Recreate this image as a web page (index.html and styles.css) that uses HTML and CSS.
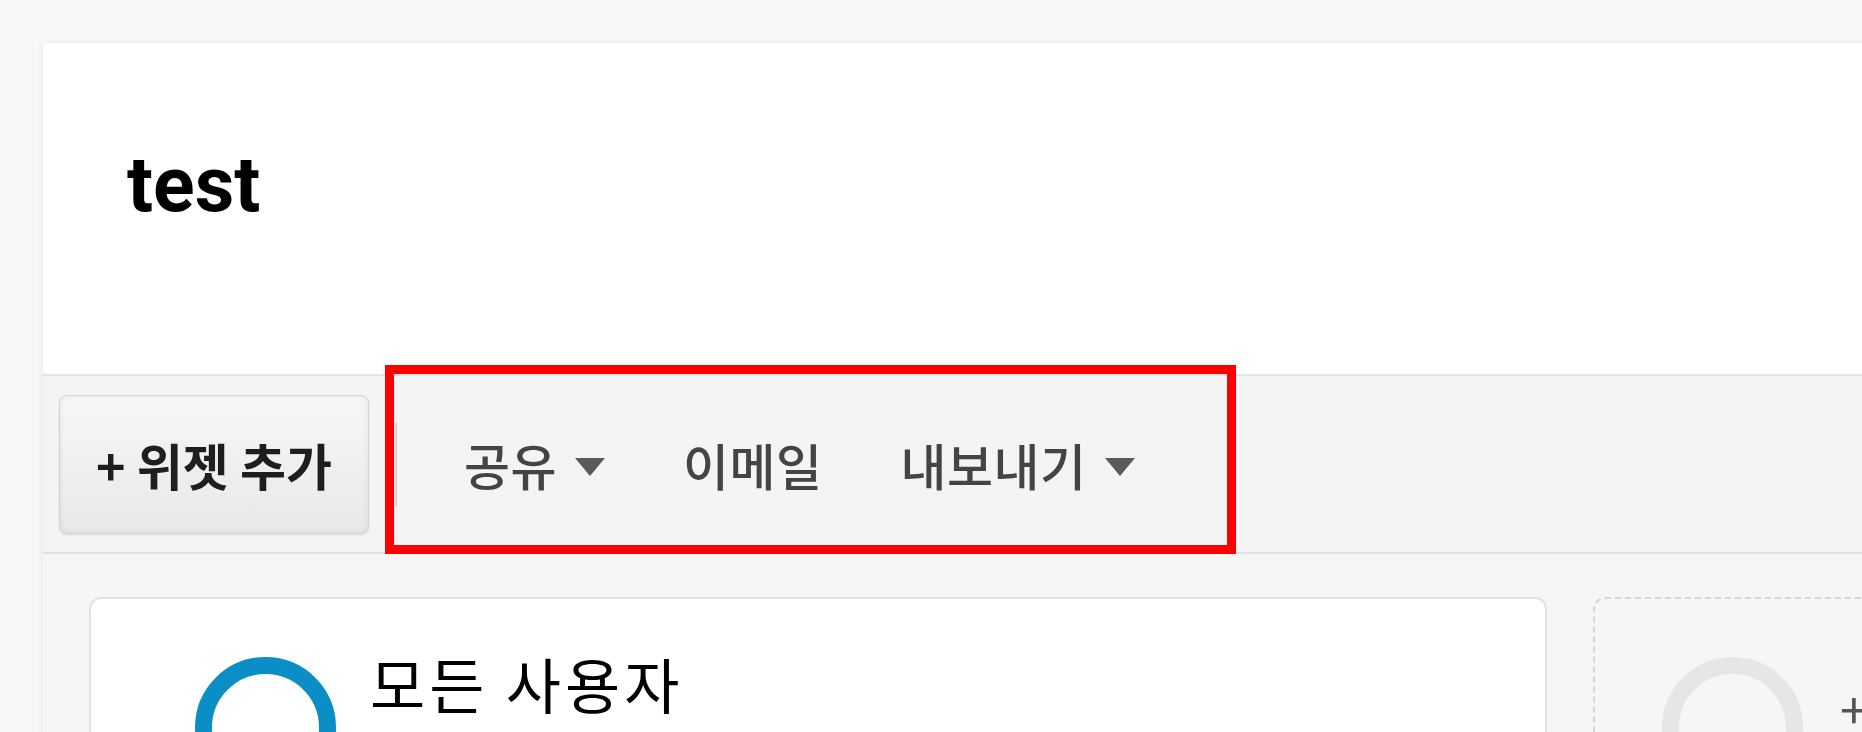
FILE: index.html
```html
<html>
<head>
<title>test - 대시보드</title>
<meta name="viewport" content="width=device-width, initial-scale=1.0">
<link rel="stylesheet" href="styles.css">
</head>
<body>
	<div id='dashboard'>

		<div class="dash-head">
			<h1>test</h1>
		</div>

		<div class="toolbar">
			<button class="add-widget">+ 위젯 추가</button>
			<span class="sep"></span>
			<a class="tool">공유<span class="caret"></span></a>
			<a class="tool">이메일</a>
			<a class="tool">내보내기<span class="caret"></span></a>
		</div>

		<div class="segments">
			<div class="segment">
				<div class="ring"></div>
				<h4>모든 사용자</h4>
			</div>
			<div class="segment empty">
				<div class="ring"></div>
				<span class="add-seg">+ 세그먼트 추가</span>
			</div>
		</div>
	</div>

	<div class="callout"></div>
</body>
</html>
```

FILE: styles.css
```css
html, body{
	margin:0;padding:0;
	overflow:hidden;
}

body{
	background-color:#f7f8fa;
	font-family:"Noto Sans CJK KR", "Noto Sans", sans-serif;
	width:1862px;
	height:732px;
	position:relative;
}

	div#dashboard{
		margin:43px -40px 0 43px;
		background-color:white;
		border-radius:4px;
		box-shadow:0 0 7px rgba(0,0,0,0.09);
	}

	div.dash-head{
		height:331px;
		box-sizing:border-box;
		padding:104px 0 0 84px;
	}

	div.dash-head h1{
		margin:0;
		font-family:Roboto, "Liberation Sans", sans-serif;
		font-weight:700;
		font-size:77px;
		line-height:1;
		color:#000;
	}

	div.toolbar{
		display:flex;
		align-items:center;
		height:176px;
		padding-left:16px;
		background-color:#f4f4f4;
		border-top:2px solid #e4e4e4;
		border-bottom:2px solid #e2e2e2;
	}

	button.add-widget{
		width:310px;
		height:139px;
		border:1px solid #d3d3d3;
		border-radius:8px;
		background:linear-gradient(#f7f7f7, #e8e8e8);
		box-shadow:inset 0 0 6px rgba(0,0,0,0.07), 0 1px 2px rgba(0,0,0,0.12);
		font-family:"Noto Sans CJK KR", sans-serif;
		font-weight:700;
		font-size:50px;
		color:#1e1e1e;
		padding:0;
	}

	span.sep{
		width:2px;
		height:83px;
		margin-left:26px;
		background-color:#d3d3d3;
	}

	a.tool{
		display:flex;
		align-items:center;
		font-size:50px;
		font-weight:500;
		letter-spacing:0.5px;
		color:#444;
		margin-left:78px;
	}

	a.tool:first-of-type{
		margin-left:67px;
	}

	span.caret{
		width:0;height:0;
		margin-left:18px;
		margin-top:6px;
		border-left:15px solid transparent;
		border-right:15px solid transparent;
		border-top:18px solid #5a5a5a;
	}

	div.segments{
		display:flex;
		gap:46px;
		background-color:#f6f6f6;
		padding:43px 0 0 46px;
		height:200px;
	}

	div.segment{
		flex:0 0 1458px;
		box-sizing:border-box;
		display:flex;
		align-items:flex-start;
		padding:58px 0 0 104px;
		background-color:white;
		border:2px solid #e2e2e2;
		border-radius:12px;
	}

	div.segment.empty{
		background-color:transparent;
		border:2px dashed #d6d6d6;
		padding-left:67px;
	}

	div.ring{
		width:141px;
		height:141px;
		box-sizing:border-box;
		border-radius:50%;
		border:17px solid #0b8dc5;
		flex:none;
	}

	div.segment.empty div.ring{
		border-color:#e6e6e6;
	}

	div.segment h4{
		margin:-10px 0 0 34px;
		font-size:60px;
		font-weight:400;
		letter-spacing:4px;
		color:#000;
		line-height:1.2;
	}

	span.add-seg{
		margin:14px 0 0 37px;
		font-size:50px;
		color:#555;
		white-space:nowrap;
	}

	div.callout{
		position:absolute;
		left:385px;
		top:365px;
		width:851px;
		height:189px;
		box-sizing:border-box;
		border:9px solid #ff0000;
	}
```
